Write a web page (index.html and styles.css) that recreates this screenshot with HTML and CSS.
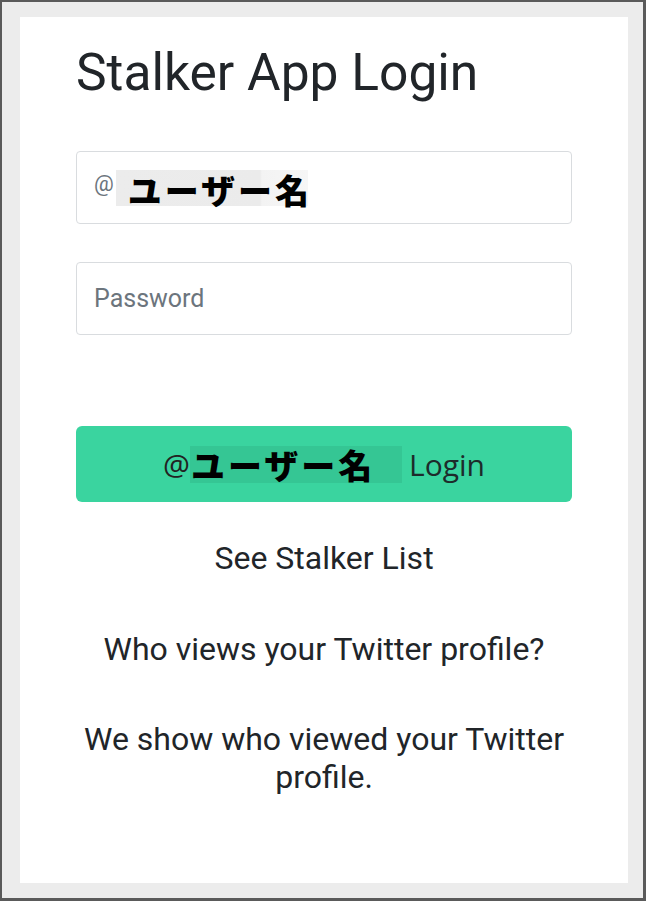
FILE: index.html
```html
<!DOCTYPE html>
<html lang="ja">
<head>
<meta charset="utf-8">
<title>Stalker App Login</title>
<link rel="stylesheet" href="styles.css">
</head>
<body>
<div class="frame">
  <main class="card">
    <h1 class="title">Stalker App Login</h1>
    <form class="form">
      <div class="field field-user">
        <span class="at">@</span><span class="name-box"><span class="name">ユーザー名</span></span>
      </div>
      <div class="field field-pass">
        <span class="placeholder">Password</span>
      </div>
      <button type="button" class="btn">
        <span class="btn-at">@</span><span class="btn-name"><span class="name">ユーザー名</span></span><span class="btn-label">Login</span>
      </button>
    </form>
    <p class="link">See Stalker List</p>
    <p class="question">Who views your Twitter profile?</p>
    <p class="desc">We show who viewed your Twitter profile.</p>
  </main>
</div>
</body>
</html>
```
FILE: styles.css
```css
* { box-sizing: border-box; }
html, body { margin: 0; padding: 0; }
body {
  width: 646px;
  height: 901px;
  font-family: Roboto, "Noto Sans CJK JP", sans-serif;
  color: #212529;
  background: #ececec;
}
.frame {
  width: 646px;
  height: 901px;
  border-style: solid;
  border-color: #5a5a5a;
  border-width: 2px 3px 3px 2px;
  background: #ececec;
  padding: 15px 15px 15px 18px;
}
.card {
  background: #fff;
  width: 608px;
  height: 866px;
  padding: 0 56px;
  display: flex;
  flex-direction: column;
}
.title {
  margin: 0;
  padding-top: 26px;
  font-weight: 400;
  font-size: 51.5px;
  line-height: 60px;
  letter-spacing: 0;
}
.form {
  margin-top: 48px;
  display: flex;
  flex-direction: column;
}
.field {
  height: 73px;
  border: 1px solid #d9dcdf;
  border-radius: 4px;
  display: flex;
  align-items: center;
  padding-left: 17px;
}
.field-pass { margin-top: 38px; }
.at {
  font-size: 22px;
  color: #6c757d;
  align-self: center;
  margin-top: -8px;
}
.name-box {
  margin-left: 2px;
  height: 36px;
  display: flex;
  align-items: center;
  padding: 0 0 0 12px;
  width: 192px;
  background: linear-gradient(90deg, #ececec 0%, #ebebeb 75%, #f3f3f3 76%, #f6f6f6 100%);
}
.name {
  font-family: "Noto Sans CJK JP", sans-serif;
  font-weight: 900;
  font-size: 34px;
  color: #000;
  line-height: 1;
  white-space: nowrap;
  letter-spacing: 3px;
  margin-top: 4px;
}
.placeholder {
  font-size: 25px;
  color: #6c757d;
}
.btn {
  margin-top: 91px;
  height: 76px;
  border: 0;
  border-radius: 6px;
  background: #3ad49f;
  display: flex;
  align-items: center;
  justify-content: center;
  padding: 0;
  font-family: "Open Sans", sans-serif;
  color: #1f2a2a;
}
.btn-at {
  font-size: 30px;
  font-family: "Open Sans", sans-serif;
  color: #222;
}
.btn-name {
  height: 37px;
  width: 212px;
  background: #35c694;
  display: flex;
  align-items: center;
  padding-left: 1px;
}
.btn-name .name { margin-top: 2px; letter-spacing: 3px; }
.btn-label {
  font-size: 30px;
  margin-left: 7px;
  color: #1d2b2b;
}
.link, .question, .desc {
  margin: 0;
  text-align: center;
  font-size: 32px;
  line-height: 37px;
}
.link { margin-top: 38px; }
.question { margin-top: 54px; }
.desc { margin-top: 52px; padding: 0 2px; line-height: 38px; }
```
